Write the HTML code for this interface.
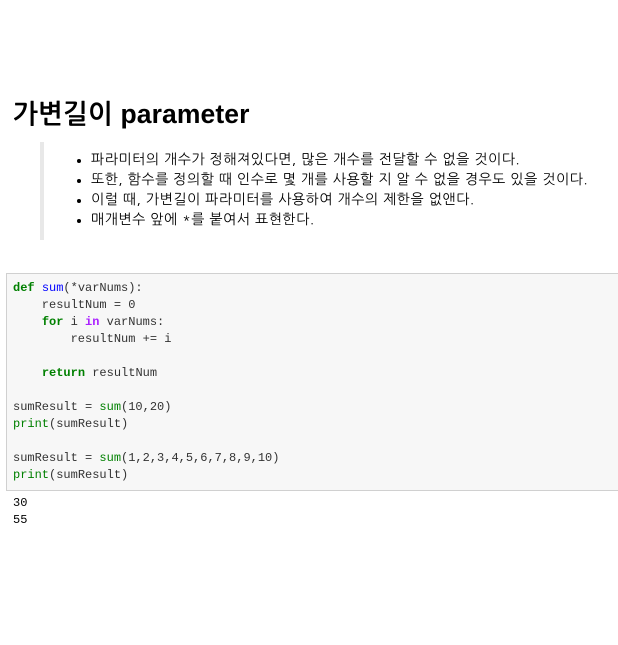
<!DOCTYPE html>
<html><head><meta charset="utf-8"><style>
body{margin:0;background:#fff;width:618px;height:645px;overflow:hidden;font-family:"Liberation Sans","NanumGothic","Noto Sans CJK KR",sans-serif;color:#000}
h1{position:absolute;left:13px;top:96px;margin:0;font-size:26.5px;font-weight:bold;line-height:36px;letter-spacing:0.1px}
.bq{position:absolute;left:40px;top:142px;width:4px;height:98px;background:#e8e8e8}
ul{position:absolute;left:58px;top:150px;margin:0;padding:0 0 0 33px;font-size:14px;line-height:20px;letter-spacing:0.55px;font-family:"NanumGothic","Noto Sans CJK KR",sans-serif;white-space:nowrap}
.code{position:absolute;left:6px;top:273px;width:620px;height:218px;background:#f7f7f7;border:1px solid #d0d0d0;box-sizing:border-box}
pre{position:absolute;left:13px;top:280px;margin:0;font-family:"Liberation Mono",monospace;font-size:12px;line-height:17px;color:#333}
.k{color:#008000;font-weight:bold}.f{color:#0000ff}.b{color:#008000}.i{color:#aa22ff;font-weight:bold}
.out{position:absolute;left:13px;top:495px;margin:0;font-family:"Liberation Mono",monospace;font-size:12px;line-height:17px;color:#000}
</style></head><body>
<h1>가변길이 parameter</h1>
<div class="bq"></div>
<ul>
<li>파라미터의 개수가 정해져있다면, 많은 개수를 전달할 수 없을 것이다.</li>
<li>또한, 함수를 정의할 때 인수로 몇 개를 사용할 지 알 수 없을 경우도 있을 것이다.</li>
<li>이럴 때, 가변길이 파라미터를 사용하여 개수의 제한을 없앤다.</li>
<li>매개변수 앞에 *를 붙여서 표현한다.</li>
</ul>
<div class="code"></div>
<pre><span class="k">def</span> <span class="f">sum</span>(*varNums):
    resultNum = 0
    <span class="k">for</span> i <span class="i">in</span> varNums:
        resultNum += i

    <span class="k">return</span> resultNum

sumResult = <span class="b">sum</span>(10,20)
<span class="b">print</span>(sumResult)

sumResult = <span class="b">sum</span>(1,2,3,4,5,6,7,8,9,10)
<span class="b">print</span>(sumResult)</pre>
<pre class="out">30
55</pre>
</body></html>
